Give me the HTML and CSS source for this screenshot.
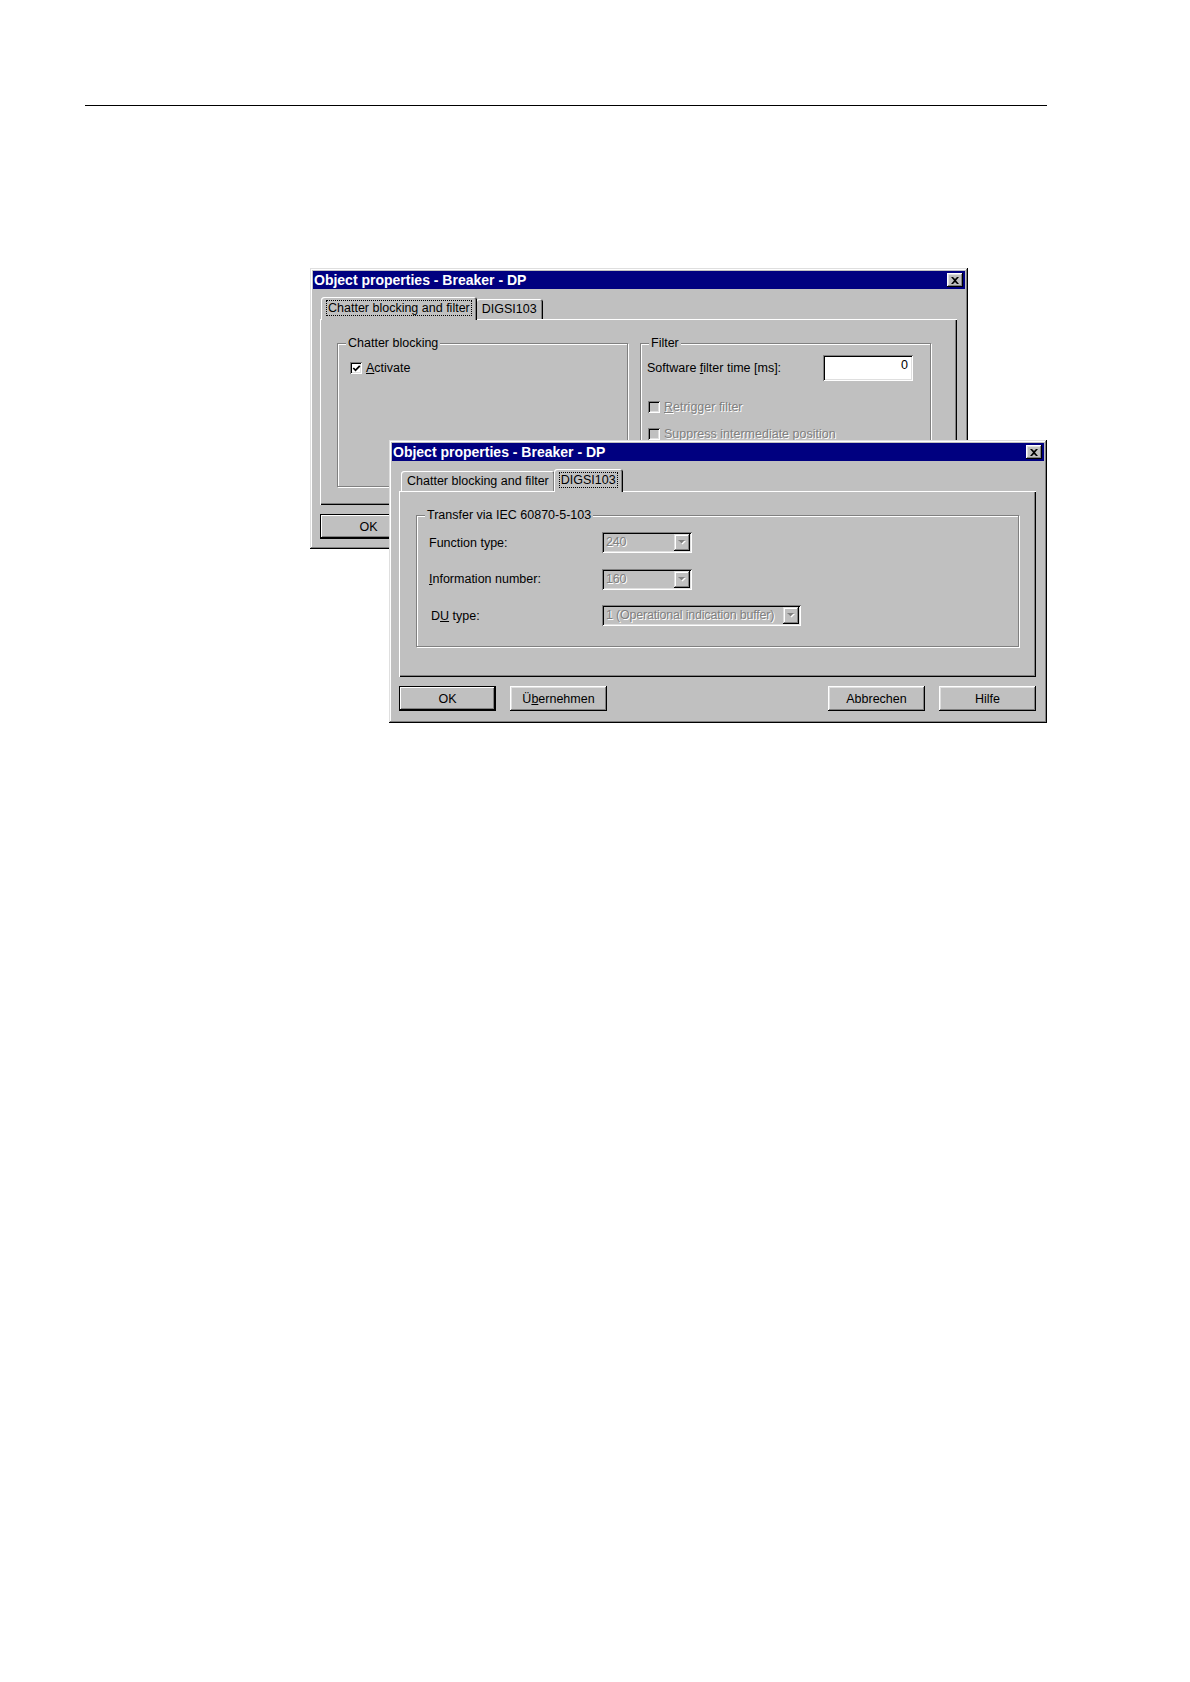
FILE: index.html
```html
<!DOCTYPE html>
<html lang="de">
<head>
<meta charset="utf-8">
<title>Object properties - Breaker - DP</title>
<link rel="stylesheet" href="styles.css">
</head>
<body>
<div class="rule"></div>
<div class="desktop">

  <div class="win win-back">
    <div class="titlebar">
      <span class="title">Object properties - Breaker - DP</span>
      <span class="close"><svg width="8" height="7" viewBox="0 0 8 7"><path d="M0 0H2L4 2L6 0H8L5 3.5L8 7H6L4 5L2 7H0L3 3.5Z" fill="#000"/></svg></span>
    </div>
    <div class="win-body">
      <div class="tabs">
        <div class="tab sel"><span class="focus">Chatter blocking and filter</span></div>
        <div class="tab">DIGSI103</div>
      </div>
      <div class="panel panel-split">
        <div class="group g-half">
          <div class="group-title">Chatter blocking</div>
          <div class="check-row r-activate">
            <span class="cb"><svg width="9" height="9" viewBox="0 0 9 9"><polyline points="1.3,4 3.5,6.3 7.8,1.8" fill="none" stroke="#000" stroke-width="1.8"/></svg></span>
            <span><u>A</u>ctivate</span>
          </div>
        </div>
        <div class="group g-half g-filter">
          <div class="group-title">Filter</div>
          <div class="field-row">
            <span>Software <u>f</u>ilter time [ms]:</span>
            <span class="edit">0</span>
          </div>
          <div class="check-row r-retrigger disabled">
            <span class="cb off"></span>
            <span><u>R</u>etrigger filter</span>
          </div>
          <div class="check-row r-suppress disabled">
            <span class="cb off"></span>
            <span>Suppress intermediate position</span>
          </div>
        </div>
      </div>
      <div class="buttons">
        <div class="btn default">OK</div>
        <div class="btn">Ü<u>b</u>ernehmen</div>
        <div class="spacer"></div>
        <div class="btn">Abbrechen</div>
        <div class="btn">Hilfe</div>
      </div>
    </div>
  </div>

  <div class="win win-front">
    <div class="titlebar">
      <span class="title">Object properties - Breaker - DP</span>
      <span class="close"><svg width="8" height="7" viewBox="0 0 8 7"><path d="M0 0H2L4 2L6 0H8L5 3.5L8 7H6L4 5L2 7H0L3 3.5Z" fill="#000"/></svg></span>
    </div>
    <div class="win-body">
      <div class="tabs">
        <div class="tab">Chatter blocking and filter</div>
        <div class="tab sel"><span class="focus">DIGSI103</span></div>
      </div>
      <div class="panel panel-single">
        <div class="group g-full">
          <div class="group-title">Transfer via IEC 60870-5-103</div>
          <div class="form-grid">
            <span class="lbl">Function type:</span>
            <div class="combo w-short"><span class="combo-text">240</span><span class="combo-btn"><svg width="8" height="5" viewBox="0 0 8 5"><polygon points="1,1 8,1 4.5,4.5" fill="#fff"/><polygon points="0,0 7,0 3.5,3.5" fill="#808080"/></svg></span></div>
            <span class="lbl"><u>I</u>nformation number:</span>
            <div class="combo w-short"><span class="combo-text">160</span><span class="combo-btn"><svg width="8" height="5" viewBox="0 0 8 5"><polygon points="1,1 8,1 4.5,4.5" fill="#fff"/><polygon points="0,0 7,0 3.5,3.5" fill="#808080"/></svg></span></div>
            <span class="lbl lbl-du">D<u>U</u> type:</span>
            <div class="combo w-long"><span class="combo-text">1 (Operational indication buffer)</span><span class="combo-btn"><svg width="8" height="5" viewBox="0 0 8 5"><polygon points="1,1 8,1 4.5,4.5" fill="#fff"/><polygon points="0,0 7,0 3.5,3.5" fill="#808080"/></svg></span></div>
          </div>
        </div>
      </div>
      <div class="buttons">
        <div class="btn default">OK</div>
        <div class="btn">Ü<u>b</u>ernehmen</div>
        <div class="spacer"></div>
        <div class="btn">Abbrechen</div>
        <div class="btn">Hilfe</div>
      </div>
    </div>
  </div>

</div>
</body>
</html>
```
FILE: styles.css
```css
html, body {
  margin: 0;
  padding: 0;
  background: #fff;
}

body {
  font-family: "Liberation Sans", Arial, sans-serif;
}

.rule {
  margin: 105px 0 0 85px;
  width: 962px;
  height: 1px;
  background: #000;
}

.desktop {
  position: relative;
  height: 1400px;
}

/* windows placed on the desktop canvas */
.win {
  position: absolute;
  width: 658px;
  box-sizing: border-box;
  padding: 3px;
  background: #c0c0c0;
  color: #000;
  font-size: 12.5px;
  display: flex;
  flex-direction: column;
  box-shadow: inset -1px -1px #000, inset 1px 1px #dfdfdf, inset -2px -2px #808080, inset 2px 2px #fff;
}

.win-back {
  left: 310px;
  top: 162px;
  height: 281px;
  z-index: 1;
}

.win-front {
  left: 389px;
  top: 334px;
  height: 283px;
  z-index: 2;
}

.titlebar {
  height: 18px;
  flex: none;
  background: #000080;
  color: #fff;
  display: flex;
  align-items: center;
  justify-content: space-between;
  padding: 0 2px 0 1px;
}

.title {
  font-weight: bold;
  font-size: 14px;
  line-height: 18px;
  white-space: nowrap;
}

.close {
  width: 16px;
  height: 14px;
  box-sizing: border-box;
  background: #c0c0c0;
  display: flex;
  align-items: center;
  justify-content: center;
  box-shadow: inset -1px -1px #000, inset 1px 1px #fff, inset -2px -2px #808080, inset 2px 2px #dfdfdf;
}

.win-body {
  flex: 1;
  display: flex;
  flex-direction: column;
  padding: 8px 8px 0 7px;
}

/* tabs */
.tabs {
  height: 22px;
  display: flex;
  align-items: flex-end;
  padding-left: 2px;
}

.tab {
  height: 20px;
  box-sizing: border-box;
  padding: 0 6px;
  display: flex;
  align-items: center;
  white-space: nowrap;
  border-radius: 3px 3px 0 0;
  box-shadow: inset 1px 1px #fff, inset -1px 0 #000, inset -2px 0 #808080;
}

.tab.sel {
  height: 23px;
  margin: 0 -1px -1px -1px;
  padding: 0 5px 2px 5px;
  position: relative;
  z-index: 2;
  background: #c0c0c0;
}

.focus {
  border: 1px dotted #000;
  padding: 0 1px;
  line-height: 14px;
}

.panel {
  height: 186px;
  flex: none;
  box-sizing: border-box;
  position: relative;
  z-index: 1;
  box-shadow: inset 1px 1px #fff, inset -1px -1px #000, inset -2px -2px #808080;
}

.panel-split {
  display: flex;
  gap: 12px;
  padding: 24px 0 0 17px;
}

.panel-single {
  padding: 24px 17px 0 17px;
}

/* group boxes */
.group {
  box-sizing: border-box;
  border: 1px solid #808080;
  box-shadow: 1px 1px 0 #fff, inset 1px 1px 0 #fff;
  display: flex;
  flex-direction: column;
  align-items: flex-start;
}

.g-half {
  width: 291px;
  height: 144px;
}

.g-full {
  height: 132px;
}

.group-title {
  margin: -8px 0 0 8px;
  padding: 0 2px;
  line-height: 15px;
  background: #c0c0c0;
  white-space: nowrap;
}

.check-row {
  display: flex;
  align-items: center;
  gap: 4px;
  line-height: 16px;
  white-space: nowrap;
}

.r-activate {
  margin: 9px 0 0 12px;
}

.r-retrigger {
  margin: 18px 0 0 7px;
}

.r-suppress {
  margin: 11px 0 0 7px;
}

.disabled {
  color: #808080;
  text-shadow: 1px 1px 0 #fff;
}

.cb {
  width: 12px;
  height: 12px;
  box-sizing: border-box;
  background: #fff;
  display: flex;
  align-items: center;
  justify-content: center;
  box-shadow: inset 1px 1px #808080, inset -1px -1px #fff, inset 2px 2px #000, inset -2px -2px #dfdfdf;
}

.cb.off {
  background: #c0c0c0;
}

.field-row {
  align-self: stretch;
  margin: 4px 17px 0 6px;
  display: flex;
  align-items: center;
  justify-content: space-between;
  white-space: nowrap;
}

.edit {
  width: 90px;
  height: 26px;
  box-sizing: border-box;
  background: #fff;
  text-align: right;
  padding: 3px 5px 0 0;
  box-shadow: inset 1px 1px #808080, inset -1px -1px #fff, inset 2px 2px #000, inset -2px -2px #dfdfdf;
}

/* form grid in DIGSI103 tab */
.form-grid {
  margin: 9px 0 0 12px;
  display: grid;
  grid-template-columns: 173px auto;
  row-gap: 15.5px;
  align-items: center;
  justify-items: start;
}

.lbl {
  white-space: nowrap;
}

.lbl-du {
  padding-left: 2px;
}

.combo {
  height: 21px;
  box-sizing: border-box;
  padding: 2px;
  display: flex;
  background: #c0c0c0;
  box-shadow: inset 1px 1px #808080, inset -1px -1px #fff, inset 2px 2px #000, inset -2px -2px #dfdfdf;
}

.w-short {
  width: 90px;
}

.w-long {
  width: 199px;
}

.combo-text {
  flex: 1;
  min-width: 0;
  overflow: hidden;
  white-space: nowrap;
  padding-left: 2px;
  line-height: 17px;
  letter-spacing: -0.2px;
  color: #808080;
  text-shadow: 1px 1px 0 #fff;
}

.combo-btn {
  width: 16px;
  flex: none;
  display: flex;
  align-items: center;
  justify-content: center;
  background: #c0c0c0;
  box-shadow: inset -1px -1px #000, inset 1px 1px #dfdfdf, inset -2px -2px #808080, inset 2px 2px #fff;
}

/* buttons */
.buttons {
  margin-top: 9px;
  display: flex;
  gap: 14px;
}

.spacer {
  flex: 1;
}

.btn {
  width: 97px;
  height: 25px;
  box-sizing: border-box;
  display: flex;
  align-items: center;
  justify-content: center;
  white-space: nowrap;
  box-shadow: inset -1px -1px #000, inset 1px 1px #fff, inset -2px -2px #808080, inset 2px 2px #dfdfdf;
}

.btn.default {
  box-shadow: inset 0 0 0 1px #000, inset -2px -2px #000, inset 2px 2px #fff, inset -3px -3px #808080;
}
```
